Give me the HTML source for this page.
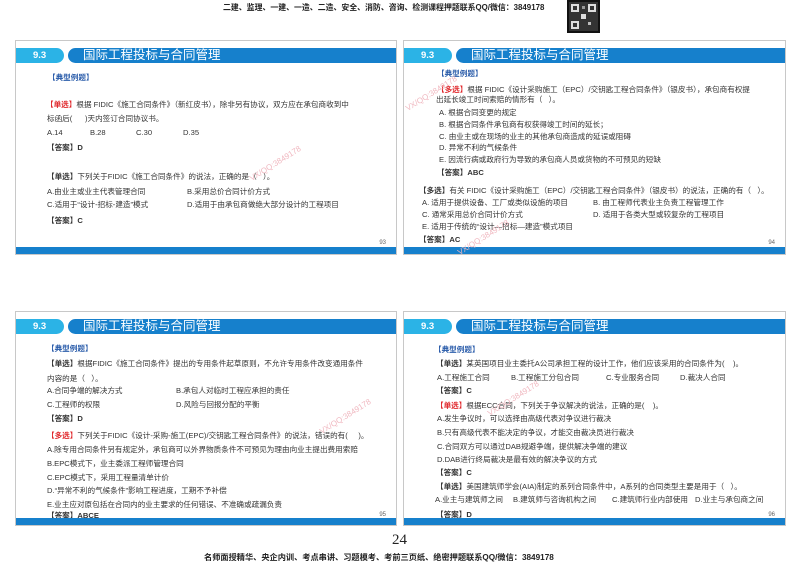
<!DOCTYPE html>
<html><head><meta charset="utf-8"><style>
*{margin:0;padding:0;box-sizing:border-box}
body{width:800px;height:566px;background:#fff;position:relative;overflow:hidden;font-family:"Liberation Sans","Noto Sans CJK SC",sans-serif;color:#333}
.s{position:absolute;border:1px solid #c8c8c8;background:#fff}
.lb{position:absolute;left:0;height:15px;width:48px;background:#2bb3e6;border-radius:0 8px 8px 0;color:#fff;font-weight:bold;font-size:9.5px;line-height:15px;padding-left:17px}
.db{position:absolute;left:52px;right:0;height:15px;background:#1680cc;border-radius:8px 0 0 8px;color:#fff;font-size:12.5px;line-height:15px;padding-left:15px}
.bb{position:absolute;left:0;right:0;bottom:0;height:7px;background:#1680cc}
.pn{position:absolute;right:10px;font-size:6px;color:#666}
.t{position:absolute;font-size:7.6px;white-space:nowrap;line-height:10px}
.k{color:#2a5caa;font-weight:bold}
.r{color:#e0262a;font-weight:bold}
.b{font-weight:bold}
.w{position:absolute;font-size:8px;color:#f0b8c0;transform:rotate(-32deg);white-space:nowrap}
</style></head><body>
<div class="t b" style="left:223px;top:3px;font-size:7.9px;color:#222">二建、监理、一建、一造、二造、安全、消防、咨询、检测课程押题联系QQ/微信：3849178</div>
<div style="position:absolute;left:567px;top:0;width:33px;height:33px;background:#333;border:2px solid #111">
<div style="position:absolute;left:2px;top:2px;width:8px;height:8px;border:2px solid #ddd"></div>
<div style="position:absolute;right:2px;top:2px;width:8px;height:8px;border:2px solid #ddd"></div>
<div style="position:absolute;left:2px;bottom:2px;width:8px;height:8px;border:2px solid #ddd"></div>
<div style="position:absolute;left:12px;top:12px;width:5px;height:5px;background:#ddd"></div>
<div style="position:absolute;left:19px;top:20px;width:3px;height:3px;background:#bbb"></div>
<div style="position:absolute;left:13px;top:4px;width:3px;height:3px;background:#999"></div></div>

<!-- slide 93 -->
<div class="s" style="left:15px;top:40px;width:382px;height:215px">
<div class="lb" style="top:7px">9.3</div><div class="db" style="top:7px">国际工程投标与合同管理</div>
<div class="t k" style="left:32px;top:32px">【典型例题】</div>
<div class="t" style="left:30px;top:59px"><span class="r">【单选】</span>根据 FIDIC《施工合同条件》（新红皮书），除非另有协议，双方应在承包商收到中</div>
<div class="t" style="left:31px;top:73px">标函后(&nbsp;&nbsp;&nbsp;&nbsp;&nbsp;&nbsp;)天内签订合同协议书。</div>
<div class="t" style="left:31px;top:87px">A.14</div><div class="t" style="left:74px;top:87px">B.28</div><div class="t" style="left:120px;top:87px">C.30</div><div class="t" style="left:167px;top:87px">D.35</div>
<div class="t b" style="left:31px;top:102px">【答案】D</div>
<div class="t" style="left:31px;top:131px"><b>【单选】</b>下列关于FIDIC《施工合同条件》的说法，正确的是（&nbsp;&nbsp;&nbsp;）。</div>
<div class="t" style="left:31px;top:146px">A.由业主或业主代表管理合同</div><div class="t" style="left:171px;top:146px">B.采用总价合同计价方式</div>
<div class="t" style="left:31px;top:159px">C.适用于“设计-招标-建造”模式</div><div class="t" style="left:171px;top:159px">D.适用于由承包商做绝大部分设计的工程项目</div>
<div class="t b" style="left:31px;top:175px">【答案】C</div>
<div class="pn" style="top:199px">93</div><div class="bb"></div>
<div class="w" style="left:230px;top:118px">VX/QQ:3849178</div>
</div>

<!-- slide 94 -->
<div class="s" style="left:403px;top:40px;width:383px;height:215px">
<div class="lb" style="top:7px">9.3</div><div class="db" style="top:7px">国际工程投标与合同管理</div>
<div class="t k" style="left:33px;top:28px">【典型例题】</div>
<div class="t" style="left:33px;top:44px"><span class="r">【多选】</span>根据 FIDIC《设计采购施工（EPC）/交钥匙工程合同条件》（银皮书），承包商有权提</div>
<div class="t" style="left:32px;top:54px">出延长竣工时间索赔的情形有（&nbsp;&nbsp;&nbsp;）。</div>
<div class="t" style="left:35px;top:67px">A. 根据合同变更的规定</div>
<div class="t" style="left:35px;top:79px">B. 根据合同条件承包商有权获得竣工时间的延长；</div>
<div class="t" style="left:35px;top:91px">C. 由业主或在现场的业主的其他承包商造成的延误或阻碍</div>
<div class="t" style="left:35px;top:102px">D. 异常不利的气候条件</div>
<div class="t" style="left:35px;top:114px">E. 因流行病或政府行为导致的承包商人员或货物的不可预见的短缺</div>
<div class="t b" style="left:33px;top:127px">【答案】ABC</div>
<div class="t" style="left:15px;top:145px"><b>【多选】</b>有关 FIDIC《设计采购施工（EPC）/交钥匙工程合同条件》（银皮书）的说法，正确的有（&nbsp;&nbsp;&nbsp;）。</div>
<div class="t" style="left:18px;top:157px">A. 适用于提供设备、工厂或类似设施的项目</div><div class="t" style="left:189px;top:157px">B. 由工程师代表业主负责工程管理工作</div>
<div class="t" style="left:18px;top:169px">C. 通常采用总价合同计价方式</div><div class="t" style="left:189px;top:169px">D. 适用于各类大型或较复杂的工程项目</div>
<div class="t" style="left:18px;top:181px">E. 适用于传统的“设计—招标—建造”模式项目</div>
<div class="t b" style="left:15px;top:194px">【答案】AC</div>
<div class="pn" style="top:199px">94</div><div class="bb"></div>
<div class="w" style="left:-2px;top:48px">VX/QQ:3849178</div>
<div class="w" style="left:50px;top:192px">VX/QQ:3849178</div>
</div>

<!-- slide 95 -->
<div class="s" style="left:15px;top:311px;width:382px;height:215px">
<div class="lb" style="top:7px">9.3</div><div class="db" style="top:7px">国际工程投标与合同管理</div>
<div class="t k" style="left:31px;top:32px">【典型例题】</div>
<div class="t" style="left:31px;top:47px"><b>【单选】</b>根据FIDIC《施工合同条件》提出的专用条件起草原则，不允许专用条件改变通用条件</div>
<div class="t" style="left:31px;top:62px">内容的是（&nbsp;&nbsp;&nbsp;）。</div>
<div class="t" style="left:31px;top:74px">A.合同争端的解决方式</div><div class="t" style="left:160px;top:74px">B.承包人对临时工程应承担的责任</div>
<div class="t" style="left:31px;top:88px">C.工程师的权限</div><div class="t" style="left:160px;top:88px">D.风险与回报分配的平衡</div>
<div class="t b" style="left:31px;top:102px">【答案】D</div>
<div class="t" style="left:31px;top:119px"><span class="r">【多选】</span>下列关于FIDIC《设计-采购-施工(EPC)/交钥匙工程合同条件》的说法，错误的有(&nbsp;&nbsp;&nbsp;&nbsp;&nbsp;)。</div>
<div class="t" style="left:31px;top:133px">A.除专用合同条件另有规定外，承包商可以外界物质条件不可预见为理由向业主提出费用索赔</div>
<div class="t" style="left:31px;top:147px">B.EPC模式下，业主委派工程师管理合同</div>
<div class="t" style="left:31px;top:161px">C.EPC模式下，采用工程量清单计价</div>
<div class="t" style="left:31px;top:174px">D.“异常不利的气候条件”影响工程进度，工期不予补偿</div>
<div class="t" style="left:31px;top:188px">E.业主应对原包括在合同内的业主要求的任何错误、不准确或疏漏负责</div>
<div class="t b" style="left:31px;top:199px">【答案】ABCE</div>
<div class="pn" style="top:200px">95</div><div class="bb"></div>
<div class="w" style="left:300px;top:100px">VX/QQ:3849178</div>
</div>

<!-- slide 96 -->
<div class="s" style="left:403px;top:311px;width:383px;height:215px">
<div class="lb" style="top:7px">9.3</div><div class="db" style="top:7px">国际工程投标与合同管理</div>
<div class="t k" style="left:30px;top:33px">【典型例题】</div>
<div class="t" style="left:32px;top:47px"><b>【单选】</b>某英国项目业主委托A公司承担工程的设计工作，他们应该采用的合同条件为(&nbsp;&nbsp;&nbsp;&nbsp;)。</div>
<div class="t" style="left:33px;top:61px">A.工程施工合同</div><div class="t" style="left:107px;top:61px">B.工程施工分包合同</div><div class="t" style="left:202px;top:61px">C.专业服务合同</div><div class="t" style="left:276px;top:61px">D.裁决人合同</div>
<div class="t b" style="left:32px;top:74px">【答案】C</div>
<div class="t" style="left:32px;top:89px"><span class="r">【单选】</span>根据ECC合同，下列关于争议解决的说法，正确的是(&nbsp;&nbsp;&nbsp;&nbsp;)。</div>
<div class="t" style="left:33px;top:102px">A.发生争议时，可以选择由高级代表对争议进行裁决</div>
<div class="t" style="left:33px;top:116px">B.只有高级代表不能决定的争议，才能交由裁决员进行裁决</div>
<div class="t" style="left:33px;top:130px">C.合同双方可以通过DAB规避争端，提供解决争端的建议</div>
<div class="t" style="left:33px;top:143px">D.DAB进行终局裁决是最有效的解决争议的方式</div>
<div class="t b" style="left:32px;top:156px">【答案】C</div>
<div class="t" style="left:32px;top:170px"><b>【单选】</b>美国建筑师学会(AIA)制定的系列合同条件中，A系列的合同类型主要是用于（&nbsp;&nbsp;&nbsp;）。</div>
<div class="t" style="left:31px;top:183px">A.业主与建筑师之间</div><div class="t" style="left:109px;top:183px">B.建筑师与咨询机构之间</div><div class="t" style="left:208px;top:183px">C.建筑师行业内部使用</div><div class="t" style="left:291px;top:183px">D.业主与承包商之间</div>
<div class="t b" style="left:32px;top:198px">【答案】D</div>
<div class="pn" style="top:200px">96</div><div class="bb"></div>
<div class="w" style="left:80px;top:82px">VX/QQ:3849178</div>
</div>

<div style="position:absolute;left:392px;top:532px;font-family:'Liberation Serif',serif;font-size:15px;color:#222">24</div>
<div class="t b" style="left:204px;top:553px;font-size:8.2px;color:#222">名师面授精华、央企内训、考点串讲、习题模考、考前三页纸、绝密押题联系QQ/微信：3849178</div>
</body></html>
